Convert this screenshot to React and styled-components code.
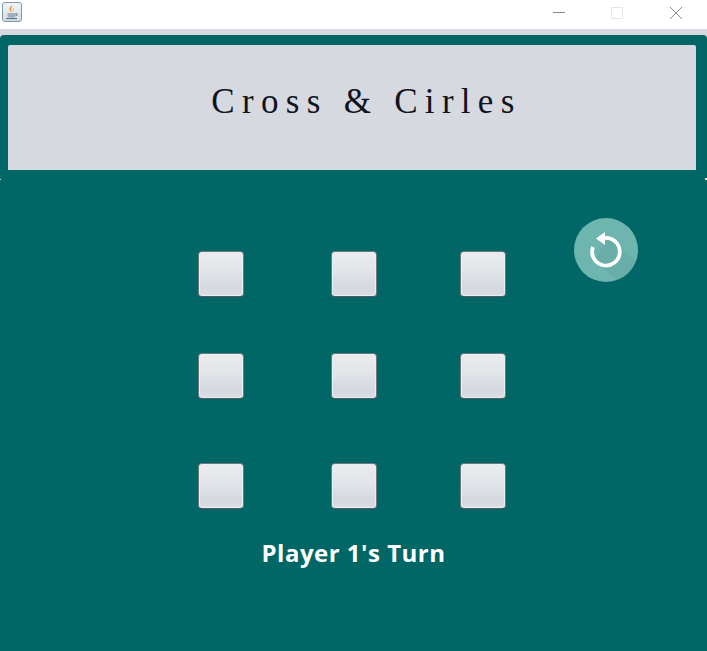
import React from 'react';
import styled, { createGlobalStyle } from 'styled-components';

const colors = {
  TEAL: '#006666',
  PANEL: '#d6d9df',
};

const GlobalStyle = createGlobalStyle`
  html, body {
    margin: 0;
    padding: 0;
    background: ${colors.PANEL};
  }
`;

const Window = styled.div`
  width: 707px;
  height: 651px;
  display: flex;
  flex-direction: column;
  overflow: hidden;
`;

const TitleBar = styled.div`
  height: 29px;
  flex: none;
  display: flex;
  align-items: flex-start;
  justify-content: space-between;
  background: #fff;
`;

const AppIcon = styled.svg`
  width: 20px;
  height: 20px;
  margin: 2px 0 0 2px;
`;

const Controls = styled.div`
  display: flex;
  padding-right: 3px;
`;

const ControlButton = styled.svg`
  width: 58px;
  height: 26px;
`;

const Content = styled.div`
  position: relative;
  flex: 1;
  margin-top: 6px;
  display: flex;
  flex-direction: column;
  background: ${colors.TEAL};
  border-radius: 4px 4px 0 0;
`;

const Header = styled.header`
  height: 125px;
  margin: 10px 11px 0 8px;
  display: flex;
  align-items: center;
  justify-content: center;
  background: ${colors.PANEL};
  border-radius: 2px 2px 0 0;
`;

const Title = styled.h1`
  margin: -12px 0 0 29px;
  font-family: 'Liberation Serif', 'Times New Roman', serif;
  font-size: 35px;
  font-weight: 400;
  letter-spacing: 7.3px;
  color: #0f1420;
`;

const EdgeDot = styled.span`
  position: absolute;
  ${(props) =>
    props.$side === 'left'
      ? 'top: 144px; left: 0; width: 1px; height: 1px;'
      : 'top: 143px; right: 0; width: 2px; height: 2px;'}
  background: #dfeeee;
`;

const Board = styled.div`
  display: flex;
  align-items: flex-start;
  padding: 48px 0 0 198px;
`;

const Grid = styled.div`
  display: grid;
  grid-template-columns: 133px 129px 46px;
  grid-template-rows: 102px 110px 46px;
  margin-top: 33px;
`;

const Cell = styled.button`
  width: 46px;
  height: 46px;
  padding: 0;
  border: 1px solid #6e7980;
  border-bottom-color: #505a61;
  border-radius: 4px;
  background: linear-gradient(#eaecef 0%, #e2e4e9 45%, #d5d8df 80%, #dadde3 100%);
  box-shadow: inset 0 0 0 1px #ebedf0;
`;

const ResetButton = styled.button`
  width: 64px;
  height: 64px;
  margin-left: 68px;
  padding: 0;
  border: 0;
  border-radius: 50%;
  background: #6db5ae;
  display: flex;
`;

const Status = styled.div`
  margin-top: 27px;
  text-align: center;
  font-family: 'Comic Sans MS', 'Open Sans', sans-serif;
  font-size: 24px;
  font-weight: 700;
  letter-spacing: 0.5px;
  color: #fff;
`;

function JavaIcon() {
  return (
    <AppIcon viewBox="0 0 20 20">
      <defs>
        <linearGradient id="tile" x1="0" y1="0" x2="0" y2="1">
          <stop offset="0" stopColor="#f4f6f8" />
          <stop offset="1" stopColor="#d3dade" />
        </linearGradient>
      </defs>
      <rect x="0.5" y="0.5" width="19" height="19" rx="2.5" fill="url(#tile)" stroke="#7b98a6" />
      <path d="M10 3c1 2-2 3-1 5 .4.8 1 1.2 1 2-1-.6-3-1.600-2.500-3.500C7.900 5 9.500 4.500 10 3z" fill="#e08a2c" />
      <path d="M12 6c.3 1.500-1.500 2-1 3.500-1-1-.6-2.600 1-3.500z" fill="#e8a850" />
      <path d="M5.500 11h8v2.500c0 1.200-1 2-2 2h-4c-1 0-2-.8-2-2z" fill="#9fb0bb" />
      <path d="M13.500 11.500h1.500v2h-1.500" fill="none" stroke="#6f8796" />
      <path d="M4 16.500h11" stroke="#5a7a8c" strokeWidth="1.200" />
    </AppIcon>
  );
}

function ResetIcon() {
  return (
    <svg width="64" height="64" viewBox="0 0 64 64" fill="none">
      <defs>
        <clipPath id="disc">
          <circle cx="32" cy="32" r="32" />
        </clipPath>
      </defs>
      <path d="M36 18L64 46V64H44L20 42z" fill="#000" opacity="0.04" clipPath="url(#disc)" />
      <path d="M31 20A13.800 13.800 0 1 1 19 29" stroke="#fff" strokeWidth="3.800" />
      <path d="M22 20.500L31 14V27z" fill="#fff" />
    </svg>
  );
}

export default function App() {
  const cells = Array.from({ length: 9 }, (_, i) => i);

  return (
    <>
      <GlobalStyle />
      <Window>
        <TitleBar>
          <JavaIcon />
          <Controls>
            <ControlButton viewBox="0 0 58 26">
              <path d="M23 12.500h12" stroke="#8c8c8c" />
            </ControlButton>
            <ControlButton viewBox="0 0 58 26">
              <rect x="23.500" y="7.500" width="11" height="11" fill="none" stroke="#e6e6e6" />
            </ControlButton>
            <ControlButton viewBox="0 0 58 26">
              <path d="M24 7l12 12M36 7L24 19" stroke="#8c8c8c" />
            </ControlButton>
          </Controls>
        </TitleBar>
        <Content>
          <Header>
            <Title>Cross &amp; Cirles</Title>
          </Header>
          <EdgeDot $side="left" />
          <EdgeDot $side="right" />
          <Board>
            <Grid>
              {cells.map((cell) => (
                <Cell key={cell} />
              ))}
            </Grid>
            <ResetButton>
              <ResetIcon />
            </ResetButton>
          </Board>
          <Status>Player 1's Turn</Status>
        </Content>
      </Window>
    </>
  );
}
